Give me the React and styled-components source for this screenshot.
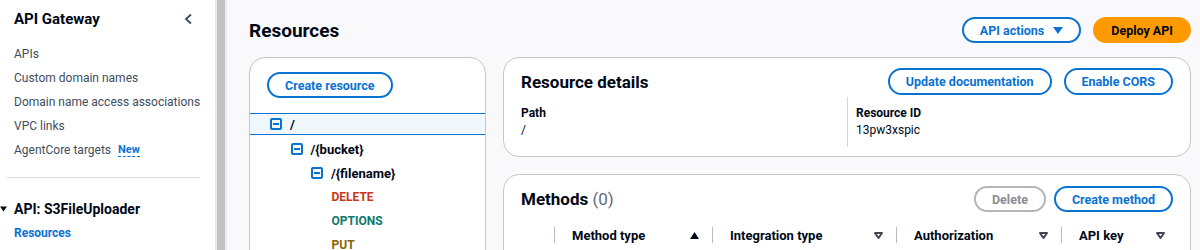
import React from "react";
import styled, { createGlobalStyle } from "styled-components";

const GlobalStyle = createGlobalStyle`
  html, body {
    margin: 0;
    padding: 0;
  }
  body {
    font-family: Roboto, "Liberation Sans", Arial, sans-serif;
    color: #000716;
    background: #ffffff;
  }
`;

const Page = styled.div`
  display: flex;
  width: 1200px;
  height: 250px;
  overflow: hidden;
`;

const Sidebar = styled.nav`
  width: 216px;
  flex-shrink: 0;
  background: #ffffff;
  border-right: 1px solid #e4e6e9;
  box-sizing: border-box;
`;

const SideHeader = styled.div`
  display: flex;
  align-items: center;
  justify-content: space-between;
  height: 38px;
  padding: 0 22px 0 14px;
  margin-bottom: 4px;

  & h2 {
    margin: 0;
    font-size: 15px;
    font-weight: 700;
    color: #000716;
  }
`;

const NavList = styled.ul`
  list-style: none;
  margin: 0;
  padding: 0 0 0 14px;
`;

const NavItem = styled.li`
  line-height: 24px;
  font-size: 12px;
  color: #414d5c;
  display: flex;
  align-items: center;
  gap: 7px;
`;

const NewBadge = styled.span`
  font-size: 11px;
  font-weight: 700;
  color: #0972d3;
  line-height: 13px;
  border-bottom: 1px dashed #0972d3;
`;

const Divider = styled.hr`
  border: none;
  border-top: 1px solid #d9dce0;
  margin: 15px 15px 0 7px;
`;

const Section = styled.div`
  margin-top: 19px;
`;

const SectionTitle = styled.div`
  display: flex;
  align-items: center;
  gap: 7px;
  line-height: 24px;
  font-size: 14px;
  font-weight: 700;
  color: #000716;
`;

const SectionLink = styled.div`
  padding-left: 14px;
  line-height: 24px;
  font-size: 12px;
  font-weight: 700;
  color: #0972d3;
`;

const ScrollTrack = styled.div`
  width: 11px;
  flex-shrink: 0;
  box-sizing: border-box;
  padding: 0 2px 0 1px;
  background: #ebebed;

  & div {
    height: 100%;
    background: #c3c3c6;
  }
`;

const Main = styled.main`
  flex: 1;
  background: #f9f9fb;
  padding: 17px 9px 0 22px;
  box-sizing: border-box;
`;

const HeaderRow = styled.div`
  display: flex;
  align-items: center;
  justify-content: space-between;
  height: 26px;
  margin-bottom: 14px;

  & h1 {
    margin: 0;
    font-size: 19px;
    font-weight: 700;
  }
`;

const ButtonGroup = styled.div`
  display: flex;
  align-items: center;
  gap: ${(p) => p.$gap || 12}px;
`;

const Button = styled.button`
  display: inline-flex;
  align-items: center;
  gap: 9px;
  height: ${(p) => p.$h || 26}px;
  padding: 0 16px;
  border-radius: 20px;
  border: 2px solid
    ${(p) => (p.$primary ? "#ff9900" : p.$disabled ? "#b4b4bb" : "#0972d3")};
  background: ${(p) => (p.$primary ? "#ff9900" : "#ffffff")};
  color: ${(p) => (p.$primary ? "#000716" : p.$disabled ? "#8c8c94" : "#0972d3")};
  font-family: inherit;
  font-size: 12.5px;
  font-weight: 700;
  white-space: nowrap;
  box-sizing: border-box;
`;

const Content = styled.div`
  display: grid;
  grid-template-columns: 237px 1fr;
  gap: 17px;
  align-items: start;
`;

const Panel = styled.section`
  background: #ffffff;
  border: 1px solid #c6c6cd;
  border-radius: 16px;
  box-sizing: border-box;
`;

const TreePanel = styled(Panel)`
  height: 260px;
  padding-top: 14px;

  & > button {
    margin-left: 17px;
  }
`;

const Tree = styled.div`
  margin-top: 15px;
`;

const TreeRow = styled.div`
  display: flex;
  align-items: center;
  height: ${(p) => (p.$selected ? 22 : 24)}px;
  margin-bottom: ${(p) => (p.$selected ? 2 : 0)}px;
  padding-left: ${(p) => 20 + p.$depth * 20.5}px;
  box-sizing: border-box;
  background: ${(p) => (p.$selected ? "#f0f7fd" : "transparent")};
  border-top: ${(p) => (p.$selected ? "1px solid #0972d3" : "none")};
  border-bottom: ${(p) => (p.$selected ? "1px solid #0972d3" : "none")};
  font-size: ${(p) => (p.$method ? 12 : 13)}px;
  font-weight: 700;
  color: ${(p) => p.$color || "#000716"};
`;

const Toggle = styled.span`
  width: 12px;
  height: 12px;
  margin-right: 8px;
  border: 2px solid #0972d3;
  border-radius: 2px;
  box-sizing: border-box;
  display: flex;
  align-items: center;
  justify-content: center;

  &::after {
    content: "";
    width: 6px;
    height: 2px;
    background: #0972d3;
  }
`;

const RightColumn = styled.div`
  display: flex;
  flex-direction: column;
  gap: 17px;
`;

const DetailsPanel = styled(Panel)`
  padding: 10px 17px 9px;
`;

const PanelHeader = styled.div`
  display: flex;
  align-items: center;
  justify-content: space-between;
  height: ${(p) => p.$h || 27}px;

  & h2 {
    margin: 0;
    font-size: 17px;
    font-weight: 700;
  }

  & h2 span {
    font-weight: 400;
    color: #5f6b7a;
  }
`;

const KeyValues = styled.div`
  display: grid;
  grid-template-columns: 1fr 1fr;
  height: 50px;
  margin-top: 2px;
`;

const KeyValue = styled.div`
  padding-top: 8px;
  padding-left: ${(p) => (p.$divided ? 8 : 0)}px;
  border-left: ${(p) => (p.$divided ? "1px solid #d5d8dc" : "none")};
  font-size: 12px;
  line-height: 17px;

  & dt {
    font-weight: 700;
  }
  & dd {
    margin: 0;
  }
`;

const MethodsPanel = styled(Panel)`
  height: 120px;
  padding-top: 11px;

  & > div:first-child {
    padding: 0 17px;
  }
`;

const TableHead = styled.div`
  display: grid;
  grid-template-columns: 33px 158px 184px 165px 1fr;
  align-items: center;
  height: 22px;
  margin-top: 12px;
  padding: 0 12px 0 17px;
`;

const HeadCell = styled.div`
  display: flex;
  align-items: center;
  justify-content: space-between;
  height: 16px;
  padding: 0 13px 0 17px;
  border-left: 1px solid #b8bcc4;
  font-size: 13px;
  font-weight: 700;
  color: #000716;
`;

const Chevron = () => (
  <svg width="9" height="12" viewBox="0 0 9 12">
    <polyline points="7,1.5 2,6 7,10.5" fill="none" stroke="#414d5c" strokeWidth="1.8" />
  </svg>
);

const CaretDown = ({ color = "#0972d3", w = 10, h = 7 }) => (
  <svg width={w} height={h} viewBox="0 0 10 7">
    <polygon points="0,0 10,0 5,7" fill={color} />
  </svg>
);

const SortAsc = () => (
  <svg width="9" height="7" viewBox="0 0 9 7">
    <polygon points="4.5,0 9,7 0,7" fill="#000716" />
  </svg>
);

const SortNone = () => (
  <svg width="9" height="7" viewBox="0 0 9 7">
    <polygon
      points="1,1 8,1 4.5,6"
      fill="none"
      stroke="#424650"
      strokeWidth="2"
      strokeLinejoin="round"
    />
  </svg>
);

const navItems = [
  "APIs",
  "Custom domain names",
  "Domain name access associations",
  "VPC links",
];

const treeRows = [
  { label: "/", depth: 0, toggle: true, selected: true },
  { label: "/{bucket}", depth: 1, toggle: true },
  { label: "/{filename}", depth: 2, toggle: true },
  { label: "DELETE", depth: 3, method: true, color: "#c9371a" },
  { label: "OPTIONS", depth: 3, method: true, color: "#0b7a6b" },
  { label: "PUT", depth: 3, method: true, color: "#8a6206" },
];

const columns = [
  { label: "Method type", icon: <SortAsc /> },
  { label: "Integration type", icon: <SortNone /> },
  { label: "Authorization", icon: <SortNone /> },
  { label: "API key", icon: <SortNone /> },
];

export default function App() {
  return (
    <>
      <GlobalStyle />
      <Page>
        <Sidebar>
          <SideHeader>
            <h2>API Gateway</h2>
            <Chevron />
          </SideHeader>
          <NavList>
            {navItems.map((item) => (
              <NavItem key={item}>{item}</NavItem>
            ))}
            <NavItem>
              AgentCore targets <NewBadge>New</NewBadge>
            </NavItem>
          </NavList>
          <Divider />
          <Section>
            <SectionTitle>
              <CaretDown color="#000716" w={7} h={6} />
              API: S3FileUploader
            </SectionTitle>
            <SectionLink>Resources</SectionLink>
          </Section>
        </Sidebar>
        <ScrollTrack>
          <div />
        </ScrollTrack>
        <Main>
          <HeaderRow>
            <h1>Resources</h1>
            <ButtonGroup>
              <Button>
                API actions <CaretDown />
              </Button>
              <Button $primary>Deploy API</Button>
            </ButtonGroup>
          </HeaderRow>
          <Content>
            <TreePanel>
              <Button>Create resource</Button>
              <Tree>
                {treeRows.map((row) => (
                  <TreeRow
                    key={row.label}
                    $depth={row.depth}
                    $selected={row.selected}
                    $method={row.method}
                    $color={row.color}
                  >
                    {row.toggle && <Toggle />}
                    {row.label}
                  </TreeRow>
                ))}
              </Tree>
            </TreePanel>
            <RightColumn>
              <DetailsPanel>
                <PanelHeader>
                  <h2>Resource details</h2>
                  <ButtonGroup>
                    <Button $h={27}>Update documentation</Button>
                    <Button $h={27}>Enable CORS</Button>
                  </ButtonGroup>
                </PanelHeader>
                <KeyValues>
                  <KeyValue>
                    <dt>Path</dt>
                    <dd>/</dd>
                  </KeyValue>
                  <KeyValue $divided>
                    <dt>Resource ID</dt>
                    <dd>13pw3xspic</dd>
                  </KeyValue>
                </KeyValues>
              </DetailsPanel>
              <MethodsPanel>
                <PanelHeader $h={26}>
                  <h2>
                    Methods <span>(0)</span>
                  </h2>
                  <ButtonGroup $gap={8}>
                    <Button $disabled>Delete</Button>
                    <Button>Create method</Button>
                  </ButtonGroup>
                </PanelHeader>
                <TableHead>
                  <div />
                  {columns.map((col) => (
                    <HeadCell key={col.label}>
                      {col.label}
                      {col.icon}
                    </HeadCell>
                  ))}
                </TableHead>
              </MethodsPanel>
            </RightColumn>
          </Content>
        </Main>
      </Page>
    </>
  );
}
